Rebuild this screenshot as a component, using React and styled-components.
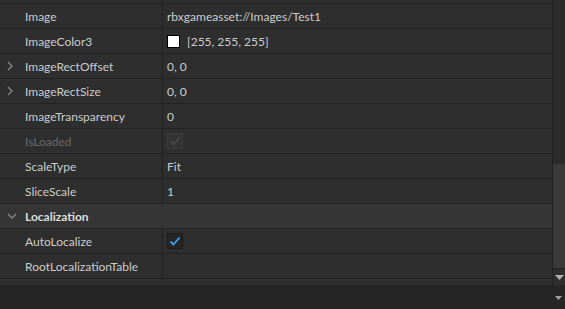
import React from "react";
import styled, { createGlobalStyle } from "styled-components";

const Global = createGlobalStyle`
  html, body { margin: 0; padding: 0; background: #2e2e2e; }
  body { font-family: Lato, "Noto Sans", sans-serif; }
`;

const Page = styled.div`
  width: 565px;
  height: 309px;
  display: flex;
  flex-direction: column;
  background: #2e2e2e;
  overflow: hidden;
`;

const Main = styled.div`
  flex: 1;
  display: flex;
  min-height: 0;
  border-bottom: 1px solid #1f1f1f;
`;

const List = styled.div`
  flex: 1;
  display: flex;
  flex-direction: column;
  overflow: hidden;
`;

const Row = styled.div`
  flex: none;
  height: ${(p) => p.$h || 24}px;
  display: grid;
  grid-template-columns: 163px 1fr;
  border-bottom: 1px solid #222222;
  background: ${(p) => (p.$header ? "#353535" : "#2e2e2e")};
`;

const NameCell = styled.div`
  position: relative;
  display: flex;
  align-items: center;
  padding-left: 25px;
  border-right: ${(p) => (p.$noDivider ? "none" : "1px solid #222222")};
  font-size: 12px;
  font-weight: ${(p) => (p.$bold ? 700 : 400)};
  color: ${(p) => (p.$disabled ? "#6a6a6a" : p.$bold ? "#dddddd" : "#cccccc")};
  white-space: nowrap;
  grid-column: ${(p) => (p.$span ? "1 / span 2" : "auto")};
`;

const ValueCell = styled.div`
  display: flex;
  align-items: center;
  gap: 7px;
  padding-left: 4px;
  font-size: 12px;
  color: #cccccc;
  white-space: nowrap;
`;

const Chevron = styled.svg`
  position: absolute;
  left: 7px;
  top: 50%;
  transform: translateY(-50%);
`;

const Swatch = styled.div`
  width: 11px;
  height: 11px;
  background: #ffffff;
  border: 1px solid #000000;
`;

const Check = styled.div`
  width: 14px;
  height: 14px;
  border: 1px solid ${(p) => (p.$disabled ? "#3c3c3c" : "#1c1c1c")};
  background: ${(p) => (p.$disabled ? "#333333" : "#262626")};
  display: flex;
  align-items: center;
  justify-content: center;
`;

const Scrollbar = styled.div`
  width: 12px;
  border-left: 1px solid #222222;
  background: #2b2b2b;
  display: flex;
  flex-direction: column;
`;

const Track = styled.div`
  flex: 1;
  display: flex;
  flex-direction: column;
  justify-content: flex-end;
`;

const Thumb = styled.div`
  height: 104px;
  background: #3a3a3a;
`;

const ArrowButton = styled.div`
  height: 17px;
  border-top: 1px solid #222222;
  background: #2e2e2e;
  display: flex;
  align-items: center;
  justify-content: center;
`;

const BottomBar = styled.div`
  height: 22px;
  flex: none;
  background: #262626;
  display: flex;
  align-items: center;
  justify-content: flex-end;
  padding-right: 3px;
`;

const RightChevron = () => (
  <Chevron width="6" height="10" viewBox="0 0 6 10">
    <path d="M1 1 L5 5 L1 9" fill="none" stroke="#8a8a8a" strokeWidth="1.3" />
  </Chevron>
);

const DownChevron = () => (
  <Chevron width="10" height="6" viewBox="0 0 10 6">
    <path d="M1 1 L5 5 L9 1" fill="none" stroke="#8a8a8a" strokeWidth="1.3" />
  </Chevron>
);

const Tick = ({ color }) => (
  <svg width="12" height="11" viewBox="0 0 12 11">
    <path d="M1.5 5.5 L4.5 8.5 L10.5 1.5" fill="none" stroke={color} strokeWidth="1.8" />
  </svg>
);

const Triangle = ({ color = "#a8a8a8", w = 8, h = 4 }) => (
  <svg width={w} height={h} viewBox={`0 0 ${w} ${h}`}>
    <path d={`M0 0 L${w} 0 L${w / 2} ${h} Z`} fill={color} />
  </svg>
);

const rows = [
  { name: "Image", value: "rbxgameasset://Images/Test1" },
  { name: "ImageColor3", value: "[255, 255, 255]", swatch: true },
  { name: "ImageRectOffset", value: "0, 0", expand: true },
  { name: "ImageRectSize", value: "0, 0", expand: true },
  { name: "ImageTransparency", value: "0" },
  { name: "IsLoaded", check: "disabled", disabled: true },
  { name: "ScaleType", value: "Fit" },
  { name: "SliceScale", value: "1" },
  { header: "Localization" },
  { name: "AutoLocalize", check: "on" },
  { name: "RootLocalizationTable", value: "" },
];

export default function App() {
  return (
    <Page>
      <Global />
      <Main>
        <List>
          <Row $h={3}>
            <NameCell />
            <ValueCell />
          </Row>
          {rows.map((r, i) =>
            r.header ? (
              <Row key={i} $header>
                <NameCell $bold $span $noDivider>
                  <DownChevron />
                  {r.header}
                </NameCell>
              </Row>
            ) : (
              <Row key={i}>
                <NameCell $disabled={r.disabled}>
                  {r.expand && <RightChevron />}
                  {r.name}
                </NameCell>
                <ValueCell>
                  {r.swatch && <Swatch />}
                  {r.check === "on" && (
                    <Check>
                      <Tick color="#3ea2f0" />
                    </Check>
                  )}
                  {r.check === "disabled" && (
                    <Check $disabled>
                      <Tick color="#4a4a4a" />
                    </Check>
                  )}
                  {r.value}
                </ValueCell>
              </Row>
            )
          )}
          <Row $h={7}>
            <NameCell $span $noDivider />
          </Row>
        </List>
        <Scrollbar>
          <Track>
            <Thumb />
          </Track>
          <ArrowButton>
            <Triangle color="#b0b0b0" w={9} h={5} />
          </ArrowButton>
        </Scrollbar>
      </Main>
      <BottomBar>
        <Triangle color="#a0a0a0" w={7} h={4} />
      </BottomBar>
    </Page>
  );
}
